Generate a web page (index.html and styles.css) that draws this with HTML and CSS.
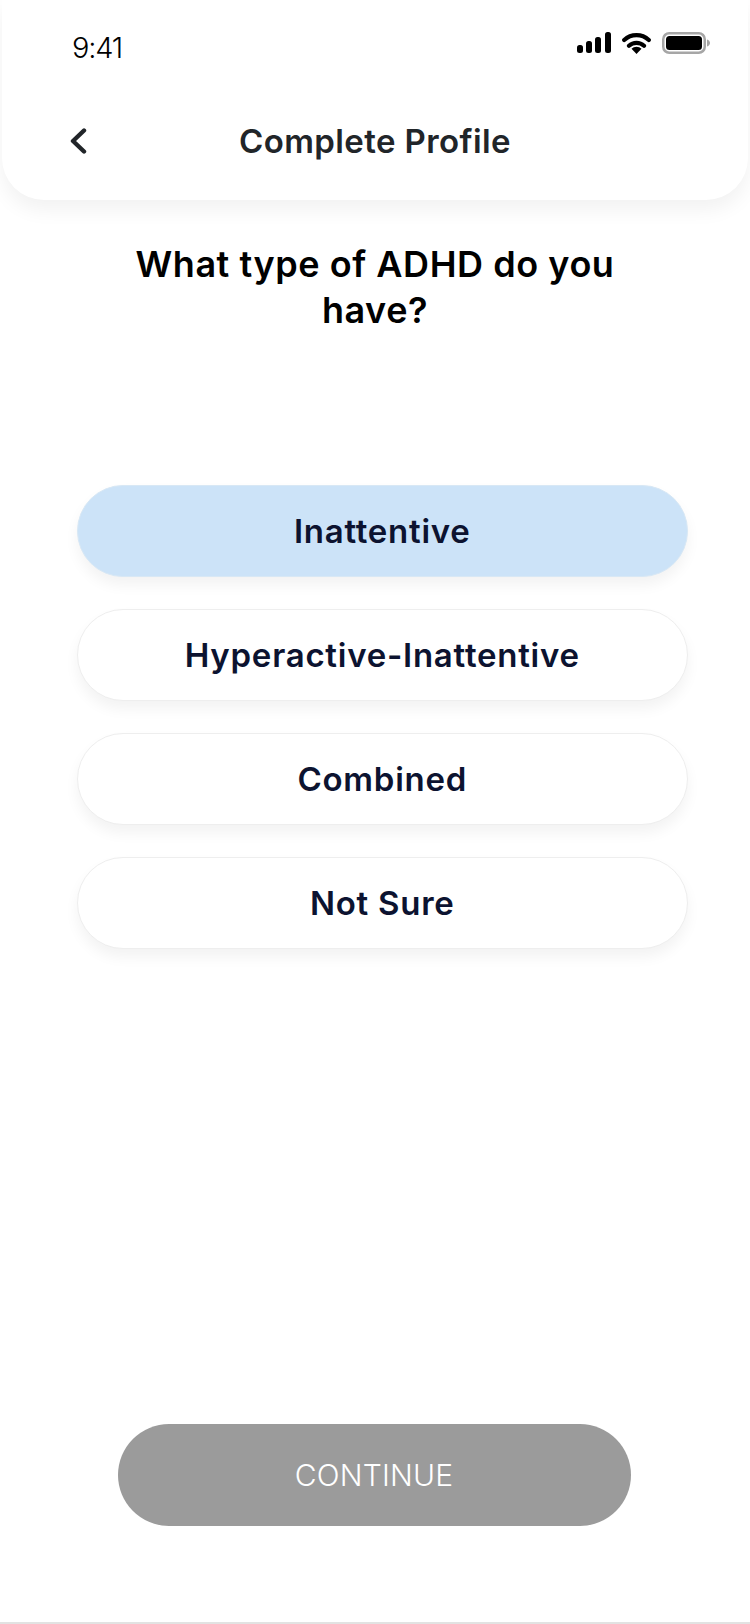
FILE: index.html
```html
<!DOCTYPE html>
<html lang="en">
<head>
<meta charset="utf-8">
<title>Complete Profile</title>
<link rel="stylesheet" href="styles.css">
</head>
<body>
<div class="screen">
  <header class="header">
    <div class="status">
      <span class="time">9:41</span>
      <div class="status-icons">
        <svg class="ic-signal" width="34" height="21" viewBox="0 0 34 21"><rect x="0" y="13" width="6" height="8" rx="2.5"/><rect x="9" y="9" width="6" height="12" rx="2.5"/><rect x="18" y="5" width="6" height="16" rx="2.5"/><rect x="28" y="0" width="6" height="21" rx="2.5"/></svg>
        <svg class="ic-wifi" width="29" height="22" viewBox="0 0 29 22"><path d="M2.200 8a18 18 0 0 1 24.600 0M7 13.800a11 11 0 0 1 15 0" fill="none" stroke="#000" stroke-width="4.200" stroke-linecap="round"/><path d="M14.500 22l-5-5.200a7 7 0 0 1 10 0z"/></svg>
        <svg class="ic-battery" width="48" height="22" viewBox="0 0 48 22"><rect x="1.250" y="1.250" width="41.500" height="19.500" rx="6" fill="none" stroke="#a6a6a6" stroke-width="2.500"/><rect x="4" y="4" width="36" height="14" rx="3.500"/><path d="M45 7.500c2 .6 3 2 3 3.500s-1 2.900-3 3.500z" fill="#a6a6a6"/></svg>
      </div>
    </div>
    <div class="nav">
      <svg class="back" width="18" height="26" viewBox="0 0 18 26"><path d="M15 2.500L4 13l11 10.500" fill="none" stroke="#212529" stroke-width="4.400" stroke-linecap="round" stroke-linejoin="round"/></svg>
      <h1 class="title">Complete Profile</h1>
    </div>
  </header>
  <main class="main">
    <h2 class="question">What type of ADHD do you have?</h2>
    <div class="options">
      <div class="option selected">Inattentive</div>
      <div class="option">Hyperactive-Inattentive</div>
      <div class="option">Combined</div>
      <div class="option">Not Sure</div>
    </div>
  </main>
  <div class="footer">
    <button class="continue" type="button">CONTINUE</button>
  </div>
</div>
</body>
</html>
```
FILE: styles.css
```css
* { box-sizing: border-box; }
html, body { margin: 0; padding: 0; background: #fff; }
body { font-family: Inter, "Liberation Sans", sans-serif; }
.screen { width: 750px; height: 1624px; display: flex; flex-direction: column; background: #fff; border-bottom: 2px solid #e2e2e2; }
.header { margin: 0 2px; height: 200px; background: #fff; border-radius: 0 0 42px 42px; box-shadow: 0 10px 20px rgba(0,0,0,.055); padding: 0 38px 0 70px; flex: none; }
.status { height: 92px; display: flex; justify-content: space-between; align-items: flex-start; }
.time { margin-top: 30px; font-size: 29px; line-height: 36px; font-weight: 300; color: #000; letter-spacing: -1.2px; }
.status-icons { display: flex; align-items: flex-start; gap: 11px; margin-top: 32px; }
.nav { display: flex; align-items: center; height: 98px; position: relative; }
.back { flex: none; margin-left: -3px; }
.title { position: absolute; left: 0; right: 32px; margin: 0; text-align: center; font-size: 33px; font-weight: 600; color: #212529; line-height: 40px; letter-spacing: .4px; }
.main { flex: 1; display: flex; flex-direction: column; }
.question { margin: 41px auto 0; width: 520px; text-align: center; font-size: 36px; line-height: 46px; font-weight: 600; color: #000; letter-spacing: .55px; }
.options { margin: 152px 62.5px 0 77px; display: flex; flex-direction: column; gap: 32px; }
.option { height: 92px; border-radius: 46px; background: #fff; border: 1px solid #eeeeee; box-shadow: 0 8px 14px rgba(0,0,0,.05); display: flex; align-items: center; justify-content: center; font-size: 33px; font-weight: 600; color: #0c1330; letter-spacing: .75px; }
.option.selected { background: #cce3f8; border-color: #d8e8f5; }
.footer { flex: none; display: flex; justify-content: center; padding: 0 2px 96px 0; }
.continue { width: 513px; height: 102px; border: 0; border-radius: 51px; background: #9b9b9b; color: #fff; font-family: inherit; font-size: 30px; font-weight: 300; letter-spacing: .2px; }
```
